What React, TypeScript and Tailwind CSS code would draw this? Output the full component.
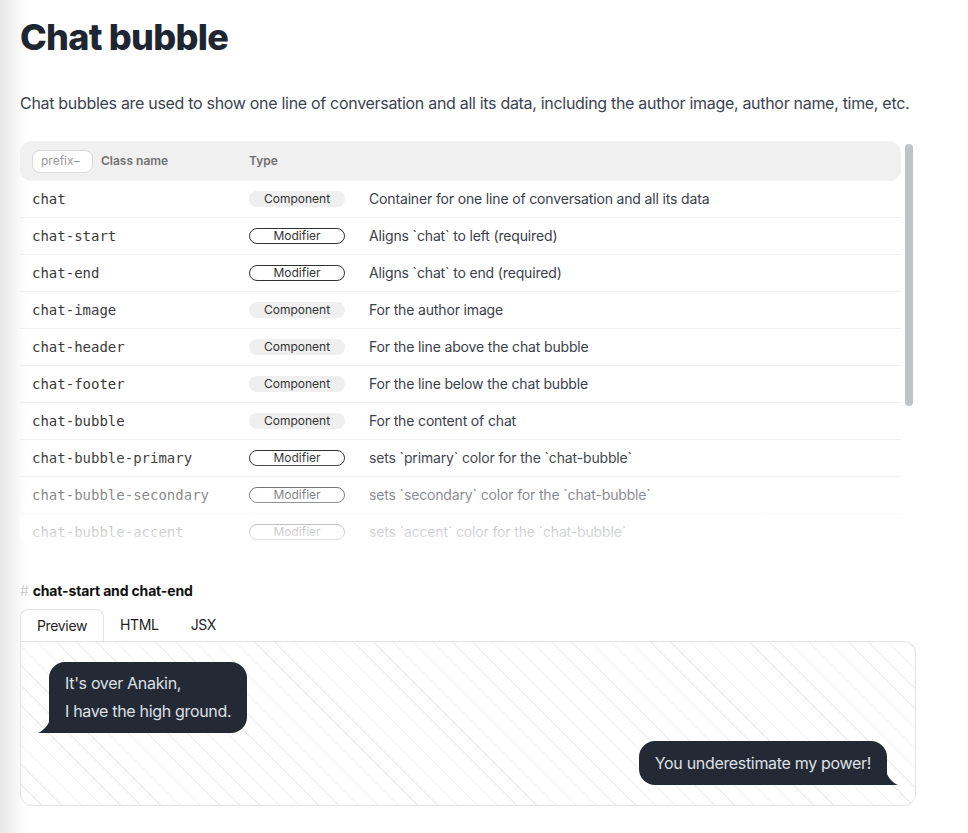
const rows = [
    { name: "chat", type: "Component", desc: "Container for one line of conversation and all its data" },
    { name: "chat-start", type: "Modifier", desc: "Aligns `chat` to left (required)" },
    { name: "chat-end", type: "Modifier", desc: "Aligns `chat` to end (required)" },
    { name: "chat-image", type: "Component", desc: "For the author image" },
    { name: "chat-header", type: "Component", desc: "For the line above the chat bubble" },
    { name: "chat-footer", type: "Component", desc: "For the line below the chat bubble" },
    { name: "chat-bubble", type: "Component", desc: "For the content of chat" },
    { name: "chat-bubble-primary", type: "Modifier", desc: "sets `primary` color for the `chat-bubble`" },
    { name: "chat-bubble-secondary", type: "Modifier", desc: "sets `secondary` color for the `chat-bubble`" },
    { name: "chat-bubble-accent", type: "Modifier", desc: "sets `accent` color for the `chat-bubble`" },
];

const Badge = ({ type }: { type: string }) => (
    <span
        className={
            type === "Component"
                ? "inline-flex items-center justify-center w-24 h-4 rounded-full bg-[#efefef] text-xs text-[#333]"
                : "inline-flex items-center justify-center w-24 h-4 rounded-full border border-[#333] text-xs text-[#333]"
        }
    >
        {type}
    </span>
);

const Bubble = ({ end, children }: { end?: boolean; children: React.ReactNode }) => (
    <div className={end ? "flex justify-end py-1" : "flex justify-start py-1"}>
        <div
            className={
                end
                    ? "relative mr-3 bg-[#242a35] text-[#dde0e5] text-base tracking-[-0.02em] leading-[28px] px-4 py-2 min-h-11 rounded-2xl rounded-br-none"
                    : "relative ml-3 bg-[#242a35] text-[#dde0e5] text-base tracking-[-0.02em] leading-[27.5px] px-4 py-2 min-h-11 rounded-2xl rounded-bl-none"
            }
        >
            {children}
            {/* tail */}
            {end ? (
                <svg className="absolute bottom-0 -right-3 w-3 h-3" viewBox="0 0 12 12">
                    <path d="M12 12 L0 12 L0 0 C0 4 8 12 12 12 Z" fill="#242a35" />
                </svg>
            ) : (
                <svg className="absolute bottom-0 -left-3 w-3 h-3" viewBox="0 0 12 12">
                    <path d="M0 12 L12 12 L12 0 C12 4 4 12 0 12 Z" fill="#242a35" />
                </svg>
            )}
        </div>
    </div>
);

export default function App() {
    return (
        <div className="min-h-screen bg-[linear-gradient(to_right,#e7e7e7,#ffffff_26px)] font-['Inter',sans-serif]">
            <div className="ml-5 w-[896px] pt-[17px]">

                {/* title */}
                <h1 className="text-4xl font-extrabold text-[#1d2631] leading-10 tracking-[-0.02em]">Chat bubble</h1>
                <p className="mt-[34px] text-base leading-6 text-[#3b4350] tracking-[-0.019em] whitespace-nowrap">
                    Chat bubbles are used to show one line of conversation and all its data, including the author image, author name, time, etc.
                </p>

                {/* class table */}
                <div className="relative mt-[26px] h-[400px] overflow-hidden">
                    <div className="w-[881px]">
                        <div className="flex items-center h-10 rounded-xl bg-[#f0f0f0] pl-3 text-xs font-semibold text-[#707070]">
                            <div className="w-[217px] flex items-center gap-2">
                                <div className="w-[61px] h-[23px] flex items-center pl-2 rounded-lg border border-[#d9d9d9] bg-white font-normal text-[#9a9a9a]">prefix–</div>
                                <span>Class name</span>
                            </div>
                            <div>Type</div>
                        </div>
                        {rows.map(r => (
                            <div key={r.name} className="flex items-center h-[37px] pl-3 border-b border-[#f0f0f0] text-sm text-[#3a404a]">
                                <div className="w-[217px] font-['DejaVu_Sans_Mono',monospace] text-[#3a3a3a]">{r.name}</div>
                                <div className="w-[120px] flex"><Badge type={r.type} /></div>
                                <div className="tracking-[-0.011em]">{r.desc}</div>
                            </div>
                        ))}
                    </div>
                    {/* fade */}
                    <div className="absolute left-0 top-[314px] w-[881px] h-[86px] bg-linear-to-b from-white/0 to-white/85" />
                    {/* scrollbar */}
                    <div className="absolute left-[885px] top-[3px] w-2 h-[262px] rounded-full bg-[#c1c4c7]" />
                </div>

                {/* example */}
                <h2 className="mt-10 text-sm leading-5 font-bold text-[#111] tracking-[-0.011em]">
                    <span className="text-[#cfcfcf] font-normal mr-1">#</span>chat-start and chat-end
                </h2>
                <div className="mt-2 flex text-sm text-[#1f1f1f] tracking-[-0.025em]">
                    <div className="relative z-10 -mb-px h-8 px-4 flex items-center border border-b-0 border-[#e3e3e3] rounded-t-lg bg-white">Preview</div>
                    <div className="h-8 px-4 flex items-center">HTML</div>
                    <div className="h-8 px-4 flex items-center">JSX</div>
                </div>
                <div className="border border-[#e3e3e3] rounded-xl rounded-tl-none p-4 bg-[repeating-linear-gradient(45deg,#efefef_0px,#efefef_1px,transparent_1px,transparent_14px)]">
                    <Bubble>
                        It's over Anakin,
                        <br />
                        I have the high ground.
                    </Bubble>
                    <Bubble end>You underestimate my power!</Bubble>
                </div>
            </div>
        </div>
    );
}
